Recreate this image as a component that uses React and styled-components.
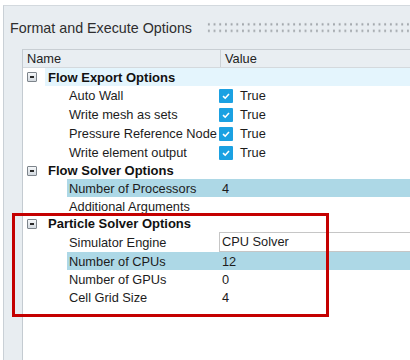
import React from "react";
import styled, { createGlobalStyle } from "styled-components";

const GlobalStyle = createGlobalStyle`
  html, body {
    margin: 0;
    padding: 0;
    background: #ffffff;
    overflow: hidden;
  }
  body {
    font-family: "Liberation Sans", Arial, sans-serif;
  }
`;

const sections = [
  {
    title: "Flow Export Options",
    active: true,
    height: 18,
    rows: [
      { name: "Auto Wall", check: true, value: "True" },
      { name: "Write mesh as sets", check: true, value: "True" },
      { name: "Pressure Reference Node", check: true, value: "True" },
      { name: "Write element output", check: true, value: "True" },
    ],
  },
  {
    title: "Flow Solver Options",
    height: 17,
    rows: [
      { name: "Number of Processors", value: "4", selected: true },
      { name: "Additional Arguments", value: "" },
    ],
  },
  {
    title: "Particle Solver Options",
    height: 17,
    marked: true,
    rows: [
      { name: "Simulator Engine", value: "CPU Solver", input: true },
      { name: "Number of CPUs", value: "12", selected: true },
      { name: "Number of GPUs", value: "0" },
      { name: "Cell Grid Size", value: "4" },
    ],
  },
];

const Page = styled.div`
  width: 410px;
  height: 360px;
  padding-top: 5px;
  padding-left: 3px;
  box-sizing: border-box;
`;

const Panel = styled.div`
  height: 100%;
  background: #e8edf1;
  border-top: 1px solid #d3d9de;
  border-left: 1px solid #c9d0d6;
  display: flex;
  flex-direction: column;
`;

const TitleBar = styled.div`
  display: flex;
  align-items: center;
  height: 43px;
  padding-left: 6px;
`;

const Title = styled.span`
  font-size: 14.3px;
  color: #2e2e2e;
  white-space: nowrap;
`;

const Grip = styled.div`
  flex: 1;
  height: 13px;
  margin-left: 14px;
  background-image: radial-gradient(circle, #9ea3a8 0.9px, transparent 1.3px);
  background-size: 5.7px 6.6px;
  background-position: 0 0;
`;

const Grid = styled.div`
  flex: 1;
  margin-left: 18px;
  background: #ffffff;
  border-top: 1px solid #c8ced3;
  border-left: 1px solid #c4cbd1;
  font-size: 12.8px;
  color: #1c1c1c;
`;

const Header = styled.div`
  display: flex;
  height: 18px;
  background: #e9eef2;
  border-bottom: 1px solid #d4d9dd;
  box-sizing: border-box;
`;

const HeadCell = styled.div`
  width: ${(p) => p.$w || "auto"};
  flex: ${(p) => (p.$w ? "none" : 1)};
  padding-left: 4px;
  line-height: 17px;
  color: #222;
  border-right: ${(p) => (p.$w ? "1px solid #cdd2d6" : "none")};
  box-sizing: border-box;
`;

const Section = styled.div`
  position: relative;
`;

const CategoryRow = styled.div`
  display: flex;
  height: ${(p) => p.$h}px;
`;

const Gutter = styled.div`
  width: 22px;
  display: flex;
  align-items: center;
  padding-left: 4px;
  box-sizing: border-box;
`;

const Expander = styled.div`
  width: 10px;
  height: 10px;
  box-sizing: border-box;
  border: 1px solid #7d848b;
  border-radius: 1px;
  background: linear-gradient(#f5f7f9, #d3d9df);
  display: flex;
  align-items: center;
  justify-content: center;

  &::after {
    content: "";
    width: 4px;
    height: 2px;
    background: #2a2a2a;
  }
`;

const CategoryLabel = styled.div`
  flex: 1;
  display: flex;
  align-items: center;
  padding-left: 3px;
  font-weight: bold;
  font-size: 13px;
  color: #111;
  background: ${(p) => (p.$active ? "#e4f5fd" : "transparent")};
`;

const Row = styled.div`
  display: flex;
  align-items: center;
  height: ${(p) => p.$h}px;
  margin-left: 44px;
  background: ${(p) => (p.$selected ? "#add8e6" : "transparent")};
`;

const NameCell = styled.div`
  width: 153px;
  padding-left: 2px;
  box-sizing: border-box;
  white-space: nowrap;
  overflow: hidden;
`;

const ValueCell = styled.div`
  flex: 1;
  display: flex;
  align-items: center;
  gap: 7px;
  padding-left: 2px;
  height: 100%;
`;

const Check = styled.div`
  width: 14px;
  height: 14px;
  margin-left: -3px;
  border-radius: 1px;
  background: #1ba1e2;
  display: flex;
  align-items: center;
  justify-content: center;
`;

const InputBox = styled.div`
  flex: 1;
  height: 20px;
  margin-left: -3px;
  border: 1px solid #c6c6c6;
  border-right: none;
  background: #fff;
  box-sizing: border-box;
  padding-left: 2px;
  line-height: 18px;
`;

const Marker = styled.div`
  position: absolute;
  top: -2px;
  left: -11px;
  width: 317px;
  height: 104px;
  border: 3px solid #c40000;
  box-sizing: border-box;
  pointer-events: none;
`;

const CheckMark = () => (
  <svg width="10" height="10" viewBox="0 0 10 10">
    <polyline
      points="2,5.2 4.2,7.2 8,3"
      fill="none"
      stroke="#fff"
      strokeWidth="1.6"
    />
  </svg>
);

const rowHeight = (row) => (row.check ? 19 : row.input ? 20 : 18);

export default function App() {
  return (
    <>
      <GlobalStyle />
      <Page>
        <Panel>
          <TitleBar>
            <Title>Format and Execute Options</Title>
            <Grip />
          </TitleBar>
          <Grid>
            <Header>
              <HeadCell $w="198px">Name</HeadCell>
              <HeadCell>Value</HeadCell>
            </Header>
            {sections.map((s) => (
              <Section key={s.title}>
                <CategoryRow $h={s.height}>
                  <Gutter>
                    <Expander />
                  </Gutter>
                  <CategoryLabel $active={s.active}>{s.title}</CategoryLabel>
                </CategoryRow>
                {s.rows.map((r) => (
                  <Row key={r.name} $h={rowHeight(r)} $selected={r.selected}>
                    <NameCell>{r.name}</NameCell>
                    <ValueCell>
                      {r.check && (
                        <Check>
                          <CheckMark />
                        </Check>
                      )}
                      {r.input ? <InputBox>{r.value}</InputBox> : r.value}
                    </ValueCell>
                  </Row>
                ))}
                {s.marked && <Marker />}
              </Section>
            ))}
          </Grid>
        </Panel>
      </Page>
    </>
  );
}
